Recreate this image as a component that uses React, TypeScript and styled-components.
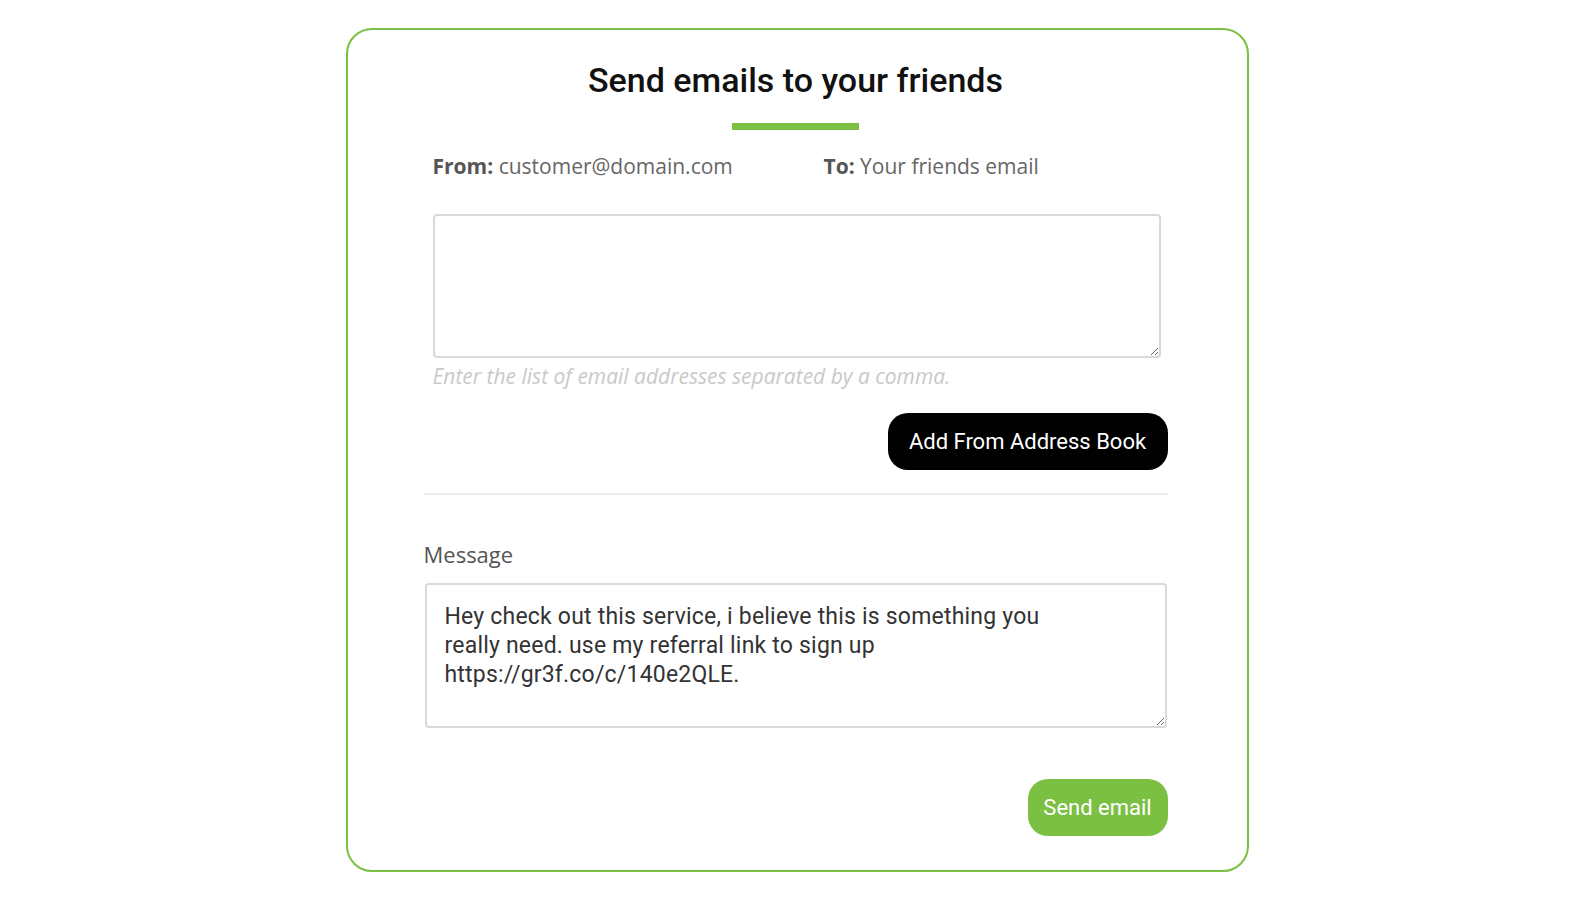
import styled, { createGlobalStyle } from 'styled-components';

const GREEN = '#7bbf43';

const messageText =
  'Hey check out this service, i believe this is something you\nreally need. use my referral link to sign up\nhttps://gr3f.co/c/140e2QLE.';

const GlobalStyle = createGlobalStyle`
  body {
    margin: 0;
    background: #ffffff;
    font-family: 'Open Sans', 'Liberation Sans', sans-serif;
  }
`;

export default function App() {
  return (
    <>
      <GlobalStyle />
      <Page>
        <Card>
          <Title>Send emails to your friends</Title>
          <TitleBar />
          <AddressRow>
            <AddressItem>
              <b>From:</b> customer@domain.com
            </AddressItem>
            <AddressItem>
              <b>To:</b> Your friends email
            </AddressItem>
          </AddressRow>
          <RecipientsBox />
          <Hint>Enter the list of email addresses separated by a comma.</Hint>
          <ButtonRow>
            <Button variant="dark">Add From Address Book</Button>
          </ButtonRow>
          <Divider />
          <Label>Message</Label>
          <MessageBox defaultValue={messageText} />
          <ButtonRow $top={51}>
            <Button variant="green">Send email</Button>
          </ButtonRow>
        </Card>
      </Page>
    </>
  );
}

const Page = styled.div`
  display: flex;
  justify-content: center;
  padding-top: 28px;
`;

const Card = styled.div`
  width: 903px;
  height: 844px;
  box-sizing: border-box;
  border: 2px solid ${GREEN};
  border-radius: 26px;
  padding: 30px 79px 0 76px;
  display: flex;
  flex-direction: column;
`;

const Title = styled.h1`
  margin: 0;
  font-family: Roboto, 'Liberation Sans', sans-serif;
  font-weight: 500;
  font-size: 34px;
  line-height: 40px;
  color: #111111;
  text-align: center;
`;

const TitleBar = styled.div`
  align-self: center;
  width: 127px;
  height: 7px;
  margin-top: 23px;
  background: ${GREEN};
`;

const AddressRow = styled.div`
  display: grid;
  grid-template-columns: 391px 1fr;
  margin: 22px 8px 0 9px;
`;

const AddressItem = styled.div`
  font-size: 21px;
  line-height: 28px;
  color: #666666;
  b {
    font-weight: 700;
    color: #555555;
  }
`;

const RecipientsBox = styled.textarea`
  display: block;
  height: 144px;
  margin: 34px 7px 0 9px;
  box-sizing: border-box;
  border: 2px solid #d9d9d9;
  border-radius: 4px;
  outline: none;
  font-family: Roboto, 'Liberation Sans', sans-serif;
  font-size: 20px;
`;

const Hint = styled.div`
  margin: 4px 8px 0 9px;
  font-style: italic;
  font-size: 21px;
  line-height: 28px;
  color: #c9c9c9;
`;

const ButtonRow = styled.div<{ $top?: number }>`
  display: flex;
  justify-content: flex-end;
  margin-top: ${({ $top }) => $top ?? 23}px;
`;

const Button = styled.button<{ variant: 'dark' | 'green' }>`
  height: 57px;
  padding: 0;
  width: ${({ variant }) => (variant === 'dark' ? '280px' : '140px')};
  border: none;
  border-radius: 20px;
  background: ${({ variant }) => (variant === 'dark' ? '#000000' : GREEN)};
  color: #ffffff;
  font-family: Roboto, 'Liberation Sans', sans-serif;
  font-size: 22px;
  cursor: pointer;
`;

const Divider = styled.hr`
  margin: 23px 0 0;
  border: none;
  height: 2px;
  background: #ececec;
`;

const Label = styled.div`
  margin-top: 45px;
  font-size: 22px;
  line-height: 28px;
  color: #555555;
`;

const MessageBox = styled.textarea`
  display: block;
  height: 145px;
  margin: 15px 1px 0;
  box-sizing: border-box;
  padding: 17px 18px;
  border: 2px solid #d9d9d9;
  border-radius: 4px;
  outline: none;
  resize: vertical;
  font-family: Roboto, 'Liberation Sans', sans-serif;
  font-size: 23px;
  line-height: 29px;
  letter-spacing: 0.2px;
  color: #333333;
`;
